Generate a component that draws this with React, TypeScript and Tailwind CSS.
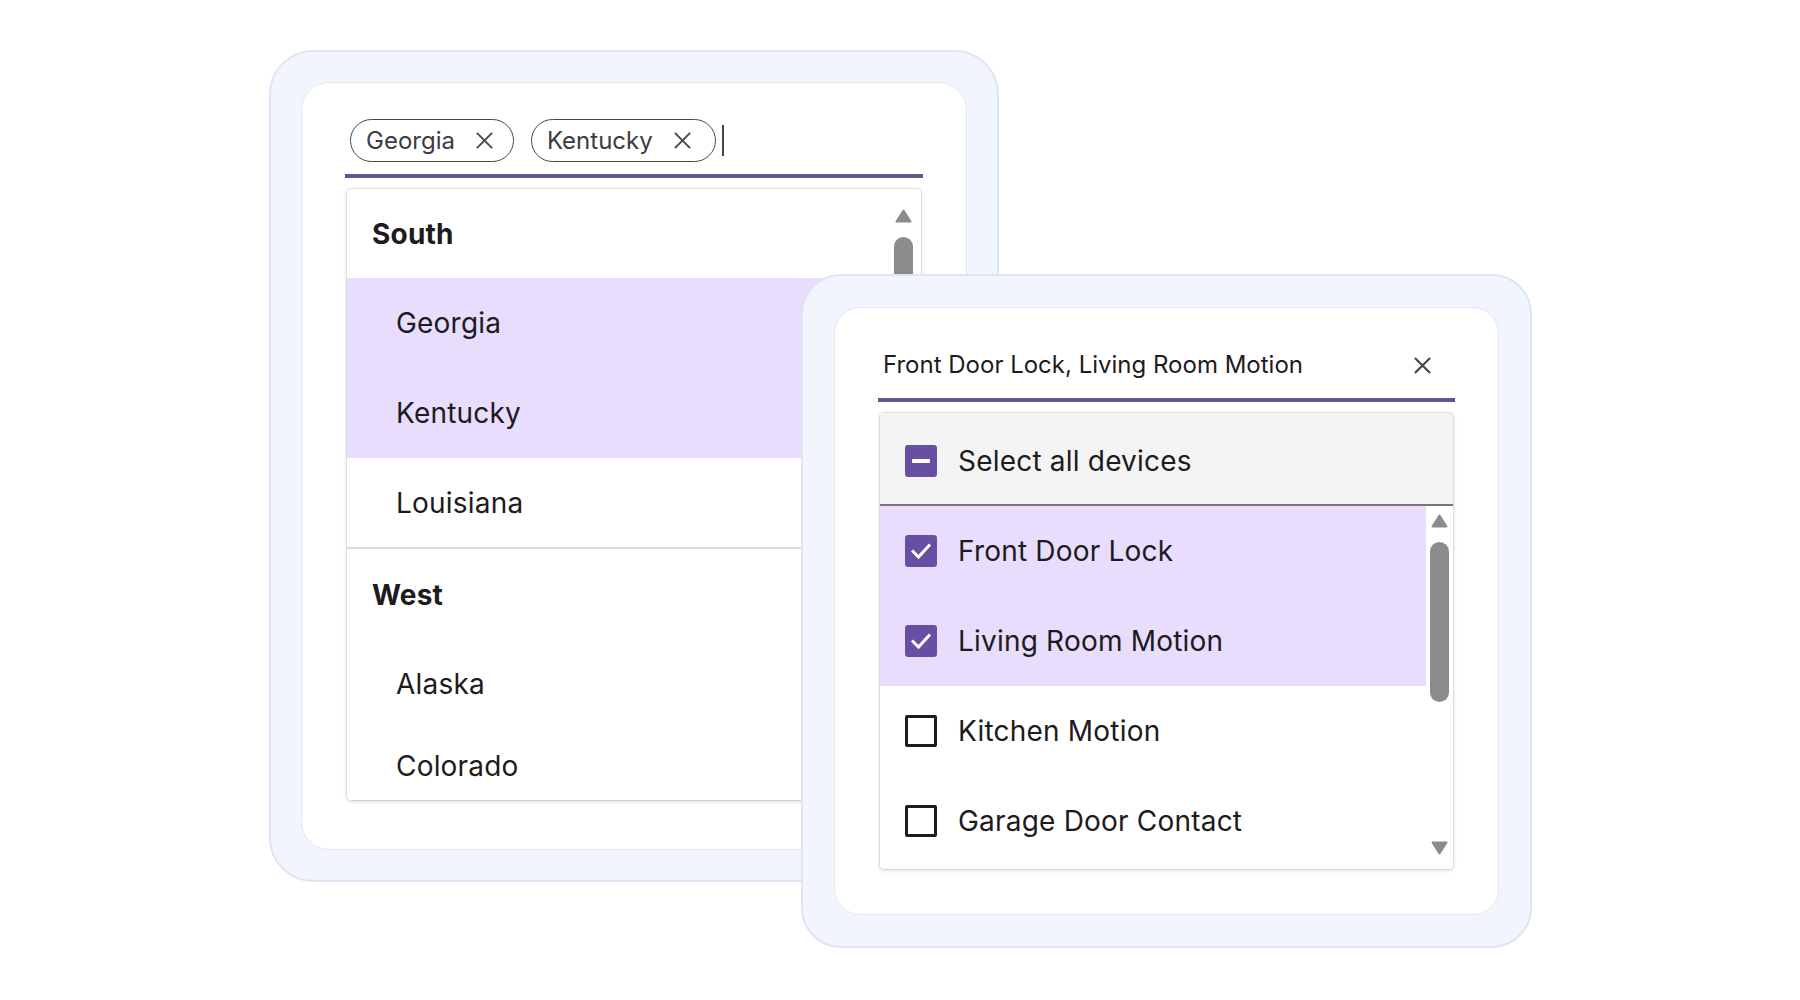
import React from "react";

const Close = ({ size = 19, sw = 2.2 }: { size?: number; sw?: number }) => (
  <svg width={size} height={size} viewBox="0 0 20 20" fill="none" stroke="#49454f" strokeWidth={sw}>
    <path d="M2 2L18 18M18 2L2 18" />
  </svg>
);

const ArrowUp = () => (
  <svg width="17" height="14" viewBox="0 0 17 14">
    <path d="M8.5 1.5 L15.5 12.5 L1.5 12.5 Z" fill="#8c8c8c" stroke="#8c8c8c" strokeWidth="2" strokeLinejoin="round" />
  </svg>
);

const ArrowDown = () => (
  <svg width="17" height="14" viewBox="0 0 17 14">
    <path d="M1.5 1.5 L15.5 1.5 L8.5 12.5 Z" fill="#8c8c8c" stroke="#8c8c8c" strokeWidth="2" strokeLinejoin="round" />
  </svg>
);

function Box({ state }: { state: "on" | "off" | "mixed" }) {
  if (state === "off")
    return <div className="w-[32px] h-[32px] shrink-0 rounded-[2px] border-[3px] border-[#1d1b20]" />;
  return (
    <div className="w-[32px] h-[32px] shrink-0 rounded-[3px] bg-[#6750a4] flex items-center justify-center">
      {state === "on" ? (
        <svg width="32" height="32" viewBox="0 0 32 32">
          <path d="M7 15.5 L13.5 22 L25 9.5" stroke="white" strokeWidth="3" fill="none" />
        </svg>
      ) : (
        <div className="w-[18px] h-[4px] rounded-[1px] bg-white" />
      )}
    </div>
  );
}

function Chip({ label, pr }: { label: string; pr: string }) {
  return (
    <div className={`h-[43px] flex items-center gap-[20px] rounded-full border-[1.5px] border-[#49454f] pl-[15px] ${pr} text-[24px] text-[#3d3a42]`}>
      <span>{label}</span>
      <Close size={19} sw={2} />
    </div>
  );
}

function Header({ label, h }: { label: string; h: string }) {
  return <div className={`${h} shrink-0 flex items-center pl-[25px] text-[28px] font-bold tracking-[0.2px]`}>{label}</div>;
}

function Item({ label, sel, h }: { label: string; sel?: boolean; h: string }) {
  return (
    <div className={`${h} shrink-0 flex items-center pl-[49px] text-[28px] tracking-[0.2px] ${sel ? "bg-[#e8ddfc]" : ""}`}>{label}</div>
  );
}

function DeviceRow({ label, state }: { label: string; state: "on" | "off" }) {
  return (
    <div className={`h-[90px] shrink-0 flex items-center gap-[21px] pl-[25px] text-[28px] tracking-[0.2px] ${state === "on" ? "bg-[#e8ddfc]" : ""}`}>
      <Box state={state} />
      <span>{label}</span>
    </div>
  );
}

export default function App() {
  return (
    <div className="relative w-[1800px] h-[1000px] overflow-hidden bg-white font-['Inter',sans-serif] text-[#1d1b20]">
      {/* Left card */}
      <div className="pt-[50px] pl-[269px]">
        <div className="w-[730px] h-[832px] flex rounded-[44px] border-2 border-[#dde5f2] bg-[#f1f6fe] p-[30px]">
          <div className="flex-1 flex flex-col rounded-[28px] border border-[#e3e7ee] bg-white px-[43px] pt-[36px]">
            <div className="flex items-center pb-[12px] border-b-[4px] border-[#65558f]">
              <div className="flex items-center gap-[17px] pl-[5px]">
                <Chip label="Georgia" pr="pr-[19px]" />
                <Chip label="Kentucky" pr="pr-[23px]" />
              </div>
              <div className="ml-[6px] w-[2px] h-[31px] bg-[#49454f]" />
            </div>
            <div className="mx-[2px] mt-[11px] h-[611px] shrink-0 flex overflow-hidden rounded-[4px] bg-white shadow-[0_0_0_1px_rgba(0,0,0,0.07),0_1px_4px_rgba(0,0,0,0.18)]">
              <div className="flex-1 flex flex-col">
                <Header label="South" h="h-[89px]" />
                <Item label="Georgia" sel h="h-[90px]" />
                <Item label="Kentucky" sel h="h-[90px]" />
                <Item label="Louisiana" h="h-[89px]" />
                <div className="shrink-0 border-t-2 border-[#dcdcdc]" />
                <Header label="West" h="h-[91px]" />
                <Item label="Alaska" h="h-[87px]" />
                <Item label="Colorado" h="h-[78px]" />
              </div>
              <div className="w-[27px] flex flex-col items-center pr-[8px] pt-[20px]">
                <ArrowUp />
                <div className="mt-[14px] w-[19px] h-[260px] rounded-t-full bg-[#8c8c8c]" />
              </div>
            </div>
          </div>
        </div>
      </div>

      {/* Right card */}
      <div className="absolute left-[801px] top-[274px] w-[731px] h-[674px] flex rounded-[40px] border-2 border-[#dde5f2] bg-[#f1f6fe] p-[31px]">
        <div className="flex-1 flex flex-col rounded-[26px] border border-[#e3e7ee] bg-white px-[43px] pt-[41px]">
          <div className="flex items-center justify-between h-[53px] shrink-0 pb-[17px] pl-[5px] pr-[23px] border-b-[4px] border-[#65558f]">
            <span className="text-[24px] leading-[32px]">Front Door Lock, Living Room Motion</span>
            <Close size={19} sw={2.3} />
          </div>
          <div className="mx-[2px] mt-[11px] h-[456px] shrink-0 flex flex-col overflow-hidden rounded-[4px] bg-white shadow-[0_0_0_1px_rgba(0,0,0,0.07),0_1px_4px_rgba(0,0,0,0.18)]">
            <div className="h-[93px] shrink-0 flex items-center gap-[21px] pl-[25px] pt-[5px] bg-[#f4f4f4] text-[28px] tracking-[0.2px] border-b-2 border-[#79747e]">
              <Box state="mixed" />
              <span>Select all devices</span>
            </div>
            <div className="flex-1 flex">
              <div className="flex-1 flex flex-col">
                <DeviceRow label="Front Door Lock" state="on" />
                <DeviceRow label="Living Room Motion" state="on" />
                <DeviceRow label="Kitchen Motion" state="off" />
                <DeviceRow label="Garage Door Contact" state="off" />
              </div>
              <div className="w-[27px] flex flex-col items-center px-[4px] pt-[8px] pb-[14px]">
                <ArrowUp />
                <div className="mt-[14px] w-[19px] h-[160px] rounded-full bg-[#8c8c8c]" />
                <div className="mt-auto">
                  <ArrowDown />
                </div>
              </div>
            </div>
          </div>
        </div>
      </div>
    </div>
  );
}
